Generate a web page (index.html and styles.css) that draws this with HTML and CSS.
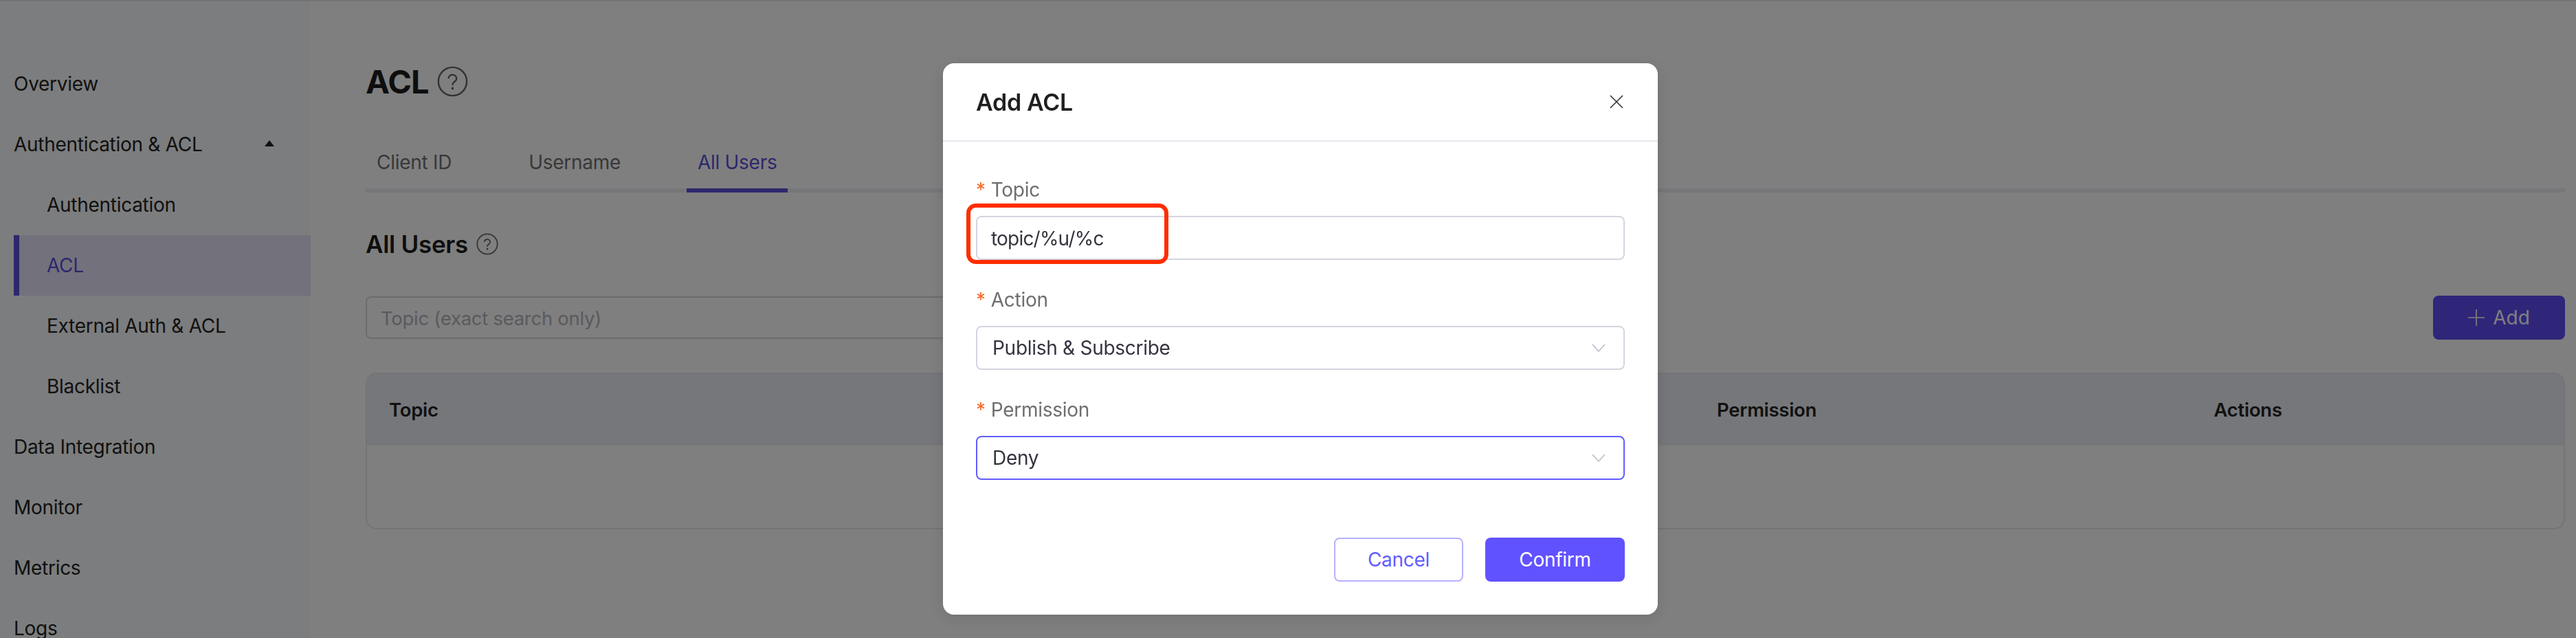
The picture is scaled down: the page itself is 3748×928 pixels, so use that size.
FILE: index.html
```html
<!DOCTYPE html>
<html lang="en">
<head>
    <meta charset="UTF-8">
    <meta name="viewport" content="width=device-width, initial-scale=1.0">
    <title>ACL</title>
    <link rel="stylesheet" href="styles.css">
</head>
<body>
    <div class="layout">
        <aside class="sidebar">
            <a class="nav-item">Overview</a>
            <a class="nav-item nav-parent">Authentication &amp; ACL <span class="nav-arrow"></span></a>
            <a class="nav-item nav-sub">Authentication</a>
            <a class="nav-item nav-sub nav-active">ACL</a>
            <a class="nav-item nav-sub">External Auth &amp; ACL</a>
            <a class="nav-item nav-sub">Blacklist</a>
            <a class="nav-item">Data Integration</a>
            <a class="nav-item">Monitor</a>
            <a class="nav-item">Metrics</a>
            <a class="nav-item">Logs</a>
        </aside>

        <main class="content">
            <div class="page-title">
                <h1>ACL</h1>
                <svg class="help-icon help-large" viewBox="0 0 24 24"><circle cx="12" cy="12" r="11"/><path d="M8.9 9.2a3.15 3.15 0 0 1 6.2.6c0 2.2-3.1 2.5-3.1 4.6"/><path class="help-dot" d="M12 17.2v.3"/></svg>
            </div>

            <div class="tabs">
                <div class="tab">Client ID</div>
                <div class="tab">Username</div>
                <div class="tab tab-active">All Users</div>
            </div>

            <div class="section-title">
                <h2>All Users</h2>
                <svg class="help-icon help-small" viewBox="0 0 24 24"><circle cx="12" cy="12" r="11"/><path d="M8.9 9.2a3.15 3.15 0 0 1 6.2.6c0 2.2-3.1 2.5-3.1 4.6"/><path class="help-dot" d="M12 17.2v.3"/></svg>
            </div>

            <div class="toolbar">
                <div class="search-input">Topic (exact search only)</div>
                <button class="add-button">
                    <svg class="plus-icon" viewBox="0 0 24 24"><path d="M12 0v24M0 12h24"/></svg>
                    Add
                </button>
            </div>

            <table class="acl-table">
                <thead>
                    <tr>
                        <th class="col-topic">Topic</th>
                        <th class="col-action"></th>
                        <th class="col-permission">Permission</th>
                        <th>Actions</th>
                    </tr>
                </thead>
                <tbody>
                    <tr><td colspan="4"></td></tr>
                </tbody>
            </table>
        </main>
    </div>

    <div class="overlay"></div>

    <div class="dialog">
        <div class="dialog-header">
            <span class="dialog-title">Add ACL</span>
            <svg class="close-icon" viewBox="0 0 20 20"><path d="M1 1l18 18M19 1L1 19"/></svg>
        </div>
        <div class="dialog-body">
            <div class="form-item">
                <label class="form-label"><span class="required">*</span>Topic</label>
                <div class="form-control input-topic">topic/%u/%c</div>
                <div class="annotation"></div>
            </div>
            <div class="form-item">
                <label class="form-label"><span class="required">*</span>Action</label>
                <div class="form-control form-select">
                    Publish &amp; Subscribe
                    <svg class="select-arrow" viewBox="0 0 20 12"><path d="M1 1l9 10 9-10"/></svg>
                </div>
            </div>
            <div class="form-item">
                <label class="form-label"><span class="required">*</span>Permission</label>
                <div class="form-control form-select is-focus">
                    Deny
                    <svg class="select-arrow" viewBox="0 0 20 12"><path d="M1 1l9 10 9-10"/></svg>
                </div>
            </div>
        </div>
        <div class="dialog-footer">
            <button class="btn btn-cancel">Cancel</button>
            <button class="btn btn-confirm">Confirm</button>
        </div>
    </div>
</body>
</html>
```

FILE: styles.css
```css
* {
    box-sizing: border-box;
}

html, body {
    height: 100%;
}

body {
    margin: 0;
    font-family: Inter, "Liberation Sans", sans-serif;
    font-size: 28px;
    letter-spacing: -0.01em;
    color: #222;
    background-color: #fff;
    overflow: hidden;
}

.layout {
    display: flex;
    height: 928px;
    border-top: 2px solid #e8e8ea;
    overflow: hidden;
}

/* sidebar */
.sidebar {
    width: 452px;
    flex-shrink: 0;
    padding: 76px 0 0 20px;
    background-color: #f9fafd;
}

.nav-item {
    display: flex;
    align-items: center;
    height: 88px;
    color: #222;
    white-space: nowrap;
}

.nav-parent {
    position: relative;
}

.nav-arrow {
    position: absolute;
    left: 365px;
    top: 38px;
    border-left: 7px solid transparent;
    border-right: 7px solid transparent;
    border-bottom: 9px solid #222;
}

.nav-sub {
    padding-left: 48px;
}

.nav-active {
    padding-left: 40px;
    border-left: 8px solid #5b4fd9;
    background-color: #e5e3f9;
    color: #5b4fd9;
}

/* main */
.content {
    flex: 1;
    min-width: 0;
    padding: 84px 16px 0 80px;
}

.page-title {
    display: flex;
    align-items: center;
    gap: 12px;
    height: 64px;
}

h1 {
    margin: 0;
    font-size: 47px;
    font-weight: 700;
    letter-spacing: -0.02em;
    color: #1c1c1c;
}

.help-icon {
    fill: none;
    stroke: #666;
    stroke-width: 1.3;
    stroke-linecap: round;
}

.help-dot {
    stroke-width: 1.8;
}

.help-large {
    width: 45px;
    height: 45px;
}

.help-small {
    width: 32px;
    height: 32px;
}

.tabs {
    display: flex;
    gap: 80px;
    margin-top: 40px;
    height: 90px;
    border-bottom: 6px solid #eceef2;
}

.tab {
    height: 90px;
    padding: 26px 16px 0;
    color: #707070;
    line-height: 40px;
}

.tab-active {
    color: #5b4fd9;
    border-bottom: 6px solid #5b4fd9;
}

.section-title {
    display: flex;
    align-items: center;
    gap: 12px;
    margin-top: 51px;
    height: 48px;
}

h2 {
    margin: 0;
    font-size: 35px;
    font-weight: 600;
    color: #1c1c1c;
}

.toolbar {
    display: flex;
    justify-content: space-between;
    align-items: center;
    margin-top: 51px;
    height: 64px;
}

.search-input {
    width: 1400px;
    height: 62px;
    padding-left: 20px;
    border: 2px solid #d6d9e2;
    border-radius: 8px;
    background-color: #fff;
    color: #b2b5bd;
    font-size: 27.5px;
    line-height: 60px;
}

.add-button {
    display: flex;
    align-items: center;
    justify-content: center;
    gap: 12px;
    width: 192px;
    height: 64px;
    border: none;
    border-radius: 8px;
    background-color: #5f4df5;
    color: #fff;
    font-family: inherit;
    font-size: 28px;
}

.plus-icon {
    width: 24px;
    height: 24px;
    fill: none;
    stroke: #fff;
    stroke-width: 1.6;
}

.acl-table {
    width: 100%;
    margin-top: 48px;
    border: 2px solid #e6e8ee;
    border-radius: 16px;
    border-spacing: 0;
    table-layout: fixed;
    overflow: hidden;
}

.acl-table th {
    height: 104px;
    padding: 0 0 0 32px;
    background-color: #edeff4;
    color: #222;
    font-size: 27.5px;
    font-weight: 600;
    text-align: left;
}

.acl-table td {
    height: 120px;
}

.col-topic {
    width: 966px;
}

.col-action {
    width: 966px;
}

.col-permission {
    width: 723px;
}

/* dialog */
.overlay {
    position: fixed;
    inset: 0;
    background-color: rgba(0, 0, 0, 0.5);
}

.dialog {
    position: fixed;
    left: 1372px;
    top: 92px;
    width: 1040px;
    height: 802px;
    background-color: #fff;
    border-radius: 16px;
    box-shadow: 0 4px 24px rgba(0, 0, 0, 0.12);
}

.dialog-header {
    display: flex;
    justify-content: space-between;
    align-items: center;
    height: 114px;
    padding: 0 50px 0 48px;
    border-bottom: 2px solid #e4e7ed;
}

.dialog-title {
    font-size: 34px;
    font-weight: 600;
    color: #1f1f1f;
}

.close-icon {
    width: 20px;
    height: 20px;
    fill: none;
    stroke: #303133;
    stroke-width: 1.6;
}

.dialog-body {
    padding: 46px 48px 0;
}

.form-item {
    position: relative;
    height: 160px;
}

.form-label {
    display: block;
    height: 62px;
    padding-top: 4px;
    color: #6e6e6e;
    font-size: 28px;
    line-height: 40px;
}

.required {
    margin-right: 8px;
    color: #f56c2c;
}

.form-control {
    display: flex;
    align-items: center;
    justify-content: space-between;
    height: 64px;
    padding: 0 26px 0 22px;
    border: 2px solid #d3d6e0;
    border-radius: 8px;
    color: #33343f;
    font-size: 28px;
}

.input-topic {
    padding: 2px 26px 0 20px;
    letter-spacing: -0.8px;
}

.is-focus {
    border-color: #615cff;
}

.select-arrow {
    width: 20px;
    height: 12px;
    fill: none;
    stroke: #b8bcc8;
    stroke-width: 1.5;
}

.annotation {
    position: absolute;
    left: -14px;
    top: 44px;
    width: 294px;
    height: 88px;
    border: 6px solid #ff2d00;
    border-radius: 14px;
}

.dialog-footer {
    display: flex;
    justify-content: flex-end;
    gap: 32px;
    padding: 50px 48px 0;
}

.btn {
    height: 64px;
    border-radius: 8px;
    font-family: inherit;
    font-size: 28px;
    letter-spacing: inherit;
}

.btn-cancel {
    width: 188px;
    border: 2px solid #b6b2ff;
    background-color: #fff;
    color: #615cff;
}

.btn-confirm {
    width: 203px;
    border: none;
    background-color: #6152ff;
    color: #fff;
}
```
